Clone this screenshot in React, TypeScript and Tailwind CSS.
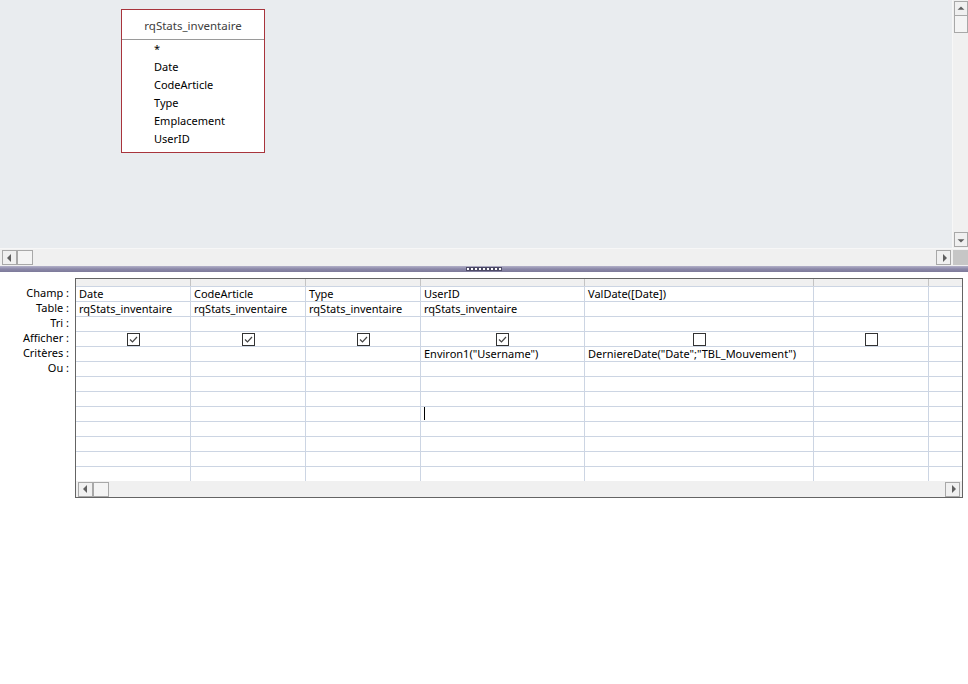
const font = { fontFamily: '"Noto Sans", "Open Sans", sans-serif' };

const cols = [115, 115, 115, 164, 229, 115, 33];

type Cell = { text?: string; check?: boolean };

const columns: Cell[][] = [
  [{ text: "Date" }, { text: "rqStats_inventaire" }, {}, { check: true }, {}, {}],
  [{ text: "CodeArticle" }, { text: "rqStats_inventaire" }, {}, { check: true }, {}, {}],
  [{ text: "Type" }, { text: "rqStats_inventaire" }, {}, { check: true }, {}, {}],
  [{ text: "UserID" }, { text: "rqStats_inventaire" }, {}, { check: true }, { text: 'Environ1("Username")' }, {}],
  [{ text: "ValDate([Date])" }, {}, {}, { check: false }, { text: 'DerniereDate("Date";"TBL_Mouvement")' }, {}],
  [{}, {}, {}, { check: false }, {}, {}],
  [{}, {}, {}, {}, {}, {}],
];

const labels = ["Champ :", "Table :", "Tri :", "Afficher :", "Critères :", "Ou :"];

const Arrow = ({ dir }: { dir: "up" | "down" | "left" | "right" }) => {
  const pts = {
    up: "3,6 7,2 11,6",
    down: "3,4 7,8 11,4",
    left: "6,3 2,7 6,11",
    right: "4,3 8,7 4,11",
  }[dir];
  const vertical = dir === "up" || dir === "down";
  return (
    <svg width={vertical ? 14 : 10} height={vertical ? 10 : 14} viewBox={vertical ? "0 0 14 10" : "0 0 10 14"}>
      <polygon points={pts} fill="#606060" />
    </svg>
  );
};

const Checkbox = ({ checked }: { checked: boolean }) => (
  <div className="w-[13px] h-[13px] border border-[#333] bg-white flex items-center justify-center">
    {checked && (
      <svg width="11" height="11" viewBox="0 0 11 11">
        <polyline points="2,5.5 4.5,8 9,3" fill="none" stroke="#444" strokeWidth="1.2" />
      </svg>
    )}
  </div>
);

const HScroll = () => (
  <div className="flex-1 flex items-center h-full">
    <div className="w-[15px] h-[15px] border border-[#a8a8a8] bg-[#f0f0f0] flex items-center justify-center">
      <Arrow dir="left" />
    </div>
    <div className="w-[16px] h-[15px] border border-[#a8a8a8] bg-[#f4f4f4]" />
    <div className="flex-1" />
    <div className="w-[15px] h-[15px] border border-[#a8a8a8] flex items-center justify-center">
      <Arrow dir="right" />
    </div>
  </div>
);

export default function App() {
  return (
    <div className="w-[968px] h-[684px] bg-white overflow-hidden text-[11px] text-black" style={font}>
      {/* upper pane */}
      <div className="flex h-[248px]">
        <div className="relative flex-1 bg-[#e9ecef] border-r border-[#f7f7f7]">
          <div className="absolute left-[121px] top-[9px] w-[144px] h-[144px] border border-[#a8343c] bg-white">
            <div className="h-[30px] border-b border-[#9a9a9a] flex items-center justify-center text-[#404040] pt-[3px] text-[11.5px]">
              rqStats_inventaire
            </div>
            <div className="pl-[32px] flex flex-col">
              {["*", "Date", "CodeArticle", "Type", "Emplacement", "UserID"].map((f) => (
                <div key={f} className="h-[18px] leading-[18px]">
                  {f}
                </div>
              ))}
            </div>
          </div>
        </div>
        <div className="w-[15px] bg-[#f0f0f0] flex flex-col items-end pt-[1px]">
          <div className="w-[14px] h-[15px] border border-[#a8a8a8] flex items-center justify-center">
            <Arrow dir="up" />
          </div>
          <div className="w-[14px] h-[17px] border border-[#a8a8a8] border-t-0 bg-[#f4f4f4]" />
          <div className="flex-1" />
          <div className="w-[14px] h-[15px] border border-[#a8a8a8] flex items-center justify-center mb-[1px]">
            <Arrow dir="down" />
          </div>
        </div>
      </div>
      {/* horizontal scrollbar of upper pane */}
      <div className="flex h-[18px] border-t border-[#f7f7f7]">
        <div className="flex-1 bg-[#f0f0f0] flex items-center px-[2px]">
          <HScroll />
        </div>
        <div className="w-[15px] bg-[#f0f0f0] flex items-center justify-end">
          <div className="w-[15px] h-[15px] bg-[#c6c6c6]" />
        </div>
      </div>
      {/* splitter */}
      <div className="h-[6px] bg-gradient-to-b from-[#b3b1c9] via-[#8b88a8] to-[#7d7a9a] flex items-center justify-center">
        <div className="flex">
          {Array.from({ length: 9 }).map((_, i) => (
            <span key={i} className="w-[4px] h-[4px] bg-white border border-[#4d4a66]" />
          ))}
        </div>
      </div>
      {/* lower pane */}
      <div className="flex pt-[6px]">
        <div className="w-[75px] pt-[7px] flex flex-col items-end pr-[6px]">
          {labels.map((l) => (
            <div key={l} className="h-[15px] leading-[15px]">
              {l}
            </div>
          ))}
        </div>
        <div className="border border-[#646464] w-[888px]">
          <div className="flex h-[7px] bg-[#f0f0f0]">
            {cols.map((w, i) => (
              <div
                key={i}
                style={{ width: w }}
                className={i < cols.length - 1 ? "border-r border-[#c4c4c4]" : ""}
              />
            ))}
          </div>
          <div className="flex">
            {cols.map((w, ci) => (
              <div
                key={ci}
                style={{ width: w }}
                className={`flex flex-col ${ci < cols.length - 1 ? "border-r border-[#ccd5e3]" : ""}`}
              >
                {Array.from({ length: 13 }).map((_, ri) => {
                  const cell = columns[ci][ri];
                  return (
                    <div
                      key={ri}
                      className="h-[15px] border-t border-[#ccd5e3] flex items-center px-[3px] pb-[1px] whitespace-nowrap overflow-hidden relative"
                    >
                      {cell?.text && <span className="leading-[13px]">{cell.text}</span>}
                      {cell?.check !== undefined && (
                        <div className="flex-1 flex justify-center pt-[1px]">
                          <Checkbox checked={cell.check} />
                        </div>
                      )}
                      {ci === 3 && ri === 8 && (
                        <span className="absolute left-[3px] top-[-1px] w-[1px] h-[14px] bg-black" />
                      )}
                    </div>
                  );
                })}
              </div>
            ))}
          </div>
          <div className="h-[16px] bg-[#f0f0f0] flex items-center px-[2px]">
            <HScroll />
          </div>
        </div>
      </div>
    </div>
  );
}
